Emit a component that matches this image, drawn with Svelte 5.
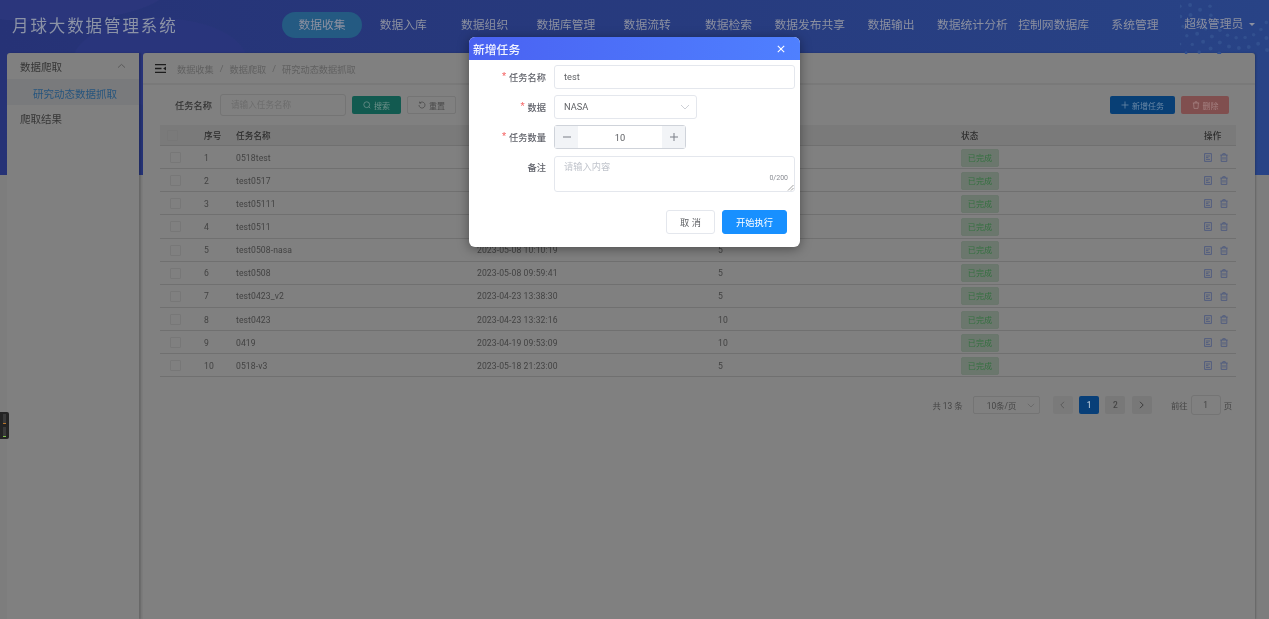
<script lang="ts">
  const navItems = ['数据收集', '数据入库', '数据组织', '数据库管理', '数据流转', '数据检索', '数据发布共享', '数据输出', '数据统计分析', '控制网数据库', '系统管理']

  const rows = [
    { name: '0518test', time: '2023-05-18 21:40:12', count: 5 },
    { name: 'test0517', time: '2023-05-17 15:21:08', count: 5 },
    { name: 'test05111', time: '2023-05-11 11:02:36', count: 10 },
    { name: 'test0511', time: '2023-05-11 10:47:55', count: 10 },
    { name: 'test0508-nasa', time: '2023-05-08 10:10:19', count: 5 },
    { name: 'test0508', time: '2023-05-08 09:59:41', count: 5 },
    { name: 'test0423_v2', time: '2023-04-23 13:38:30', count: 5 },
    { name: 'test0423', time: '2023-04-23 13:32:16', count: 10 },
    { name: '0419', time: '2023-04-19 09:53:09', count: 10 },
    { name: '0518-v3', time: '2023-05-18 21:23:00', count: 5 },
  ]

  // dots in the header's top right corner
  const dots: { x: number; y: number; r: number }[] = []
  for (const [radius, step, r] of [[30, 0.3, 1.8], [40, 0.25, 2], [50, 0.2, 2], [60, 0.17, 1.7], [70, 0.15, 1.4]]) {
    for (let a = -0.4; a < 3.3; a += step) {
      const x = 60 + Math.cos(a) * radius
      const y = 8 + Math.sin(a) * radius
      if (x > 0 && x < 89 && y > 0 && y < 54) dots.push({ x, y, r })
    }
  }
</script>

<div class="page">
  <svg class="dots" width="89" height="54" viewBox="0 0 89 54">
    {#each dots as d}
      <circle cx={d.x} cy={d.y} r={d.r} fill="#32508f" />
    {/each}
  </svg>

  <header class="topbar">
    <div class="title">月球大数据管理系统</div>
    <nav class="nav">
      {#each navItems as item, i}
        <span class="nav-item" class:active={i === 0}>{item}</span>
      {/each}
    </nav>
    <div class="user">超级管理员<i class="caret"></i></div>
  </header>

  <div class="body">
    <aside class="sidebar">
      <div class="menu-title">
        <span>数据爬取</span>
        <svg width="9" height="6" viewBox="0 0 9 6"><path d="M1 4.6 4.5 1.4 8 4.6" fill="none" stroke="#5a5a5a" stroke-width="1" /></svg>
      </div>
      <div class="menu-sub">研究动态数据抓取</div>
      <div class="menu-title">爬取结果</div>
    </aside>

    <main class="content">
      <div class="crumbs">
        <svg class="fold" width="11" height="9" viewBox="0 0 11 9">
          <path d="M0 .7h11M0 4.5h6.5M0 8.3h11" stroke="#1c1c1c" stroke-width="1.3" />
          <path d="M11 2.6v3.8L8.2 4.5z" fill="#1c1c1c" />
        </svg>
        <span>数据收集</span><b>/</b><span>数据爬取</span><b>/</b><span>研究动态数据抓取</span>
      </div>

      <div class="panel">
        <div class="toolbar">
          <label class="search-label" for="task-name">任务名称</label>
          <input id="task-name" class="search-input" placeholder="请输入任务名称" />
          <button class="btn teal">
            <svg width="8" height="8" viewBox="0 0 8 8"><circle cx="3.7" cy="3.7" r="2.9" fill="none" stroke="currentColor" stroke-width=".8" /><path d="M5.8 5.8 7.3 7.3" stroke="currentColor" stroke-width=".8" /></svg>
            搜索
          </button>
          <button class="btn plain">
            <svg width="8" height="8" viewBox="0 0 8 8"><path d="M1 4a3 3 0 1 0 1-2.2M1.6.6v1.6h1.6" fill="none" stroke="currentColor" stroke-width=".8" /></svg>
            重置
          </button>
          <span class="spacer"></span>
          <button class="btn blue">
            <svg width="8" height="8" viewBox="0 0 8 8"><path d="M4 .5v7M.5 4h7" stroke="currentColor" stroke-width=".8" /></svg>
            新增任务
          </button>
          <button class="btn red">
            <svg width="8" height="8" viewBox="0 0 8 8"><path d="M.8 2h6.4M3 2V.8h2V2M1.6 2l.4 5.4h4L6.4 2" fill="none" stroke="currentColor" stroke-width=".8" /></svg>
            删除
          </button>
        </div>

        <div class="table">
          <div class="tr head">
            <span class="check head-check"></span>
            <span>序号</span>
            <span>任务名称</span>
            <span>创建时间</span>
            <span>任务数量</span>
            <span>状态</span>
            <span>操作</span>
          </div>
          {#each rows as row, i}
            <div class="tr">
              <span class="check"></span>
              <span>{i + 1}</span>
              <span>{row.name}</span>
              <span>{row.time}</span>
              <span>{row.count}</span>
              <span><em class="tag">已完成</em></span>
              <span class="ops">
                <svg width="8" height="9" viewBox="0 0 8 9"><path d="M.6.6h6.8v7.8H.6zM2 3h4M2 4.6h2.4M2 6.4h4" fill="none" stroke="#48567f" stroke-width=".8" /></svg>
                <svg width="8" height="9" viewBox="0 0 8 9"><path d="M.4 2h7.2M2.8 2V.7h2.4V2M1.2 2v6.4h5.6V2M3 4v2.6M5 4v2.6" fill="none" stroke="#48567f" stroke-width=".8" /></svg>
              </span>
            </div>
          {/each}
        </div>

        <div class="pager">
          <span>共 13 条</span>
          <span class="size">10条/页
            <svg width="8" height="5" viewBox="0 0 8 5"><path d="M.8.8 4 4l3.2-3.2" fill="none" stroke="#666" stroke-width=".8" /></svg>
          </span>
          <span class="pages">
            <span class="page-btn faint">
              <svg width="5" height="8" viewBox="0 0 5 8"><path d="M4 .8.8 4 4 7.2" fill="none" stroke="#5c5c5c" stroke-width="1" /></svg>
            </span>
            <span class="page-btn current">1</span>
            <span class="page-btn">2</span>
            <span class="page-btn">
              <svg width="5" height="8" viewBox="0 0 5 8"><path d="M1 .8 4.2 4 1 7.2" fill="none" stroke="#3c3c3c" stroke-width="1" /></svg>
            </span>
          </span>
          <span class="jump"><span>前往</span><span class="jump-box">1</span><span>页</span></span>
        </div>
      </div>
    </main>
  </div>

  <div class="widget">
    <div class="seg"><i class="o"></i></div>
    <div class="seg"><i class="g"></i></div>
  </div>

  <div class="dialog">
    <div class="dialog-head">
      <span>新增任务</span>
      <svg width="8" height="8" viewBox="0 0 8 8"><path d="M.8.8l6.4 6.4M7.2.8.8 7.2" stroke="#fff" stroke-width="1.1" /></svg>
    </div>
    <div class="form">
      <div class="field">
        <span class="flabel"><i>*</i><span>任务名称</span></span>
        <span class="box wide"><span class="val">test</span></span>
      </div>
      <div class="field">
        <span class="flabel"><i>*</i><span>数据</span></span>
        <span class="box select"><span class="val">NASA</span>
          <svg width="10" height="6" viewBox="0 0 10 6"><path d="M1 1 5 5l4-4" fill="none" stroke="#c0c4cc" stroke-width=".8" /></svg>
        </span>
      </div>
      <div class="field">
        <span class="flabel"><i>*</i><span>任务数量</span></span>
        <span class="stepper">
          <span class="step"><svg width="10" height="10" viewBox="0 0 10 10"><path d="M1 5h8" stroke="#7b7f87" stroke-width="1" /></svg></span>
          <span class="num">10</span>
          <span class="step"><svg width="10" height="10" viewBox="0 0 10 10"><path d="M1 5h8M5 1v8" stroke="#7b7f87" stroke-width="1" /></svg></span>
        </span>
      </div>
      <div class="field top">
        <span class="flabel"><span>备注</span></span>
        <span class="box area">
          <span class="ph">请输入内容</span>
          <span class="counter">0/200</span>
          <svg class="grip" width="7" height="7" viewBox="0 0 7 7"><path d="M1 6.5 6.5 1M4 6.5 6.5 4" stroke="#777" stroke-width=".7" /></svg>
        </span>
      </div>
    </div>
    <div class="dialog-foot">
      <button class="dbtn">取 消</button>
      <button class="dbtn primary">开始执行</button>
    </div>
  </div>
</div>

<style>
  :global(body) {
    margin: 0;
    overflow: hidden;
  }

  .page {
    position: relative;
    height: 619px;
    overflow: hidden;
    font-family: Roboto, 'Noto Sans CJK SC', sans-serif;
    font-size: 8.6px;
    color: #424242;
    filter: blur(0.35px);
    background:
      linear-gradient(#7d7d7d, #7d7d7d) 0 175px no-repeat,
      radial-gradient(ellipse 125px 36px at 45px -14px, #2b367c 98%, transparent 100%) no-repeat,
      radial-gradient(ellipse 88px 44px at 160px 62px, #29357c 98%, transparent 100%) no-repeat,
      linear-gradient(90deg, #263276, #284386);
  }

  .dots {
    position: absolute;
    top: 0;
    right: 0;
  }

  .topbar {
    position: relative;
    display: flex;
    align-items: center;
    height: 53px;
    padding: 0 0 4px 12px;
    box-sizing: border-box;
  }

  .title {
    width: 270px;
    font-size: 16.5px;
    letter-spacing: 1.9px;
    color: #8c93a6;
    white-space: nowrap;
  }

  .nav {
    display: grid;
    grid-template-columns: repeat(11, 81.3px);
  }

  .nav-item {
    width: 80px;
    height: 26px;
    line-height: 26px;
    text-align: center;
    font-size: 11.8px;
    color: #8c90a0;
    white-space: nowrap;
  }

  .nav-item.active {
    background: #245a82;
    border-radius: 13px;
  }

  .user {
    margin-left: 8px;
    font-size: 11.8px;
    color: #8c90a0;
    white-space: nowrap;
    transform: translateY(-2px);
  }

  .caret {
    display: inline-block;
    margin-left: 6px;
    border: 3px solid transparent;
    border-top-color: #8c90a0;
    vertical-align: -1px;
  }

  .body {
    display: flex;
    height: 566px;
    padding-left: 7px;
  }

  .sidebar {
    width: 132px;
    background: #808080;
    border-radius: 3px 0 0 0;
    box-shadow: 2px 0 2px rgba(0, 0, 0, 0.18);
    font-size: 10.5px;
    color: #363636;
  }

  .menu-title {
    display: flex;
    align-items: center;
    justify-content: space-between;
    height: 26px;
    padding: 0 13px;
  }

  .menu-sub {
    display: flex;
    align-items: center;
    height: 26px;
    padding: 2px 0 0 26px;
    box-sizing: border-box;
    background: #797a7c;
    color: #26557e;
  }

  .content {
    width: 1112px;
    margin-left: 4px;
    background: #808080;
    border-radius: 3px 3px 0 0;
    box-shadow: 1px 0 2px rgba(0, 0, 0, 0.2);
  }

  .crumbs {
    display: flex;
    align-items: center;
    height: 32px;
    box-sizing: border-box;
    padding: 1px 0 0 12px;
    border-bottom: 2px solid #797979;
    font-size: 9.2px;
    color: #606060;
  }

  .fold {
    margin-right: 11px;
    margin-top: -1px;
  }

  .crumbs b {
    margin: 0 6px;
    font-weight: 400;
  }

  .panel {
    padding: 9px 19px 0 17px;
  }

  .toolbar {
    display: flex;
    align-items: center;
    height: 22px;
    padding-left: 15px;
    margin-bottom: 9px;
  }

  .search-label {
    width: 45px;
    font-size: 9.25px;
    font-weight: 500;
    color: #333;
  }

  .search-input {
    width: 126px;
    height: 22px;
    box-sizing: border-box;
    padding: 0 10px;
    margin-right: 6px;
    background: transparent;
    border: 1px solid #747474;
    border-radius: 3px;
    font: inherit;
  }

  .search-input::placeholder {
    color: #6c6c6c;
  }

  .spacer {
    flex: 1;
  }

  .btn {
    display: flex;
    align-items: center;
    justify-content: center;
    gap: 3px;
    width: 49px;
    height: 18px;
    padding: 0;
    margin-right: 6px;
    border: 1px solid transparent;
    border-radius: 2px;
    font: inherit;
    font-size: 8px;
  }

  .teal { background: #125a50; color: #6f918b; }
  .plain { background: transparent; border-color: #747474; color: #4a4a4a; }
  .blue { width: 65px; background: #083f75; color: #6a88a6; }
  .red { width: 48px; margin-right: 7px; background: #804f4f; color: #a38080; }

  .tr {
    display: grid;
    grid-template-columns: 44px 32px 241px 241px 243px 243px 32px;
    align-items: center;
    height: 23.15px;
    box-sizing: border-box;
    padding-top: 1px;
    border-bottom: 1px solid #707070;
    letter-spacing: 0.1px;
  }

  .tr.head {
    height: 21px;
    padding-top: 0;
    background: #7a7a7a;
    font-weight: 500;
    color: #2e2e2e;
  }

  .check {
    width: 9px;
    height: 9px;
    margin-left: 10px;
    border: 1px solid #777;
    border-radius: 1px;
  }

  .head-check {
    margin-left: 7px;
  }

  .tag {
    display: block;
    width: 38px;
    height: 18px;
    line-height: 17px;
    box-sizing: border-box;
    text-align: center;
    font-style: normal;
    font-size: 8px;
    background: #6b776d;
    border: 1px solid #6a766c;
    border-radius: 2px;
    color: #33703f;
  }

  .ops {
    display: flex;
    gap: 8px;
  }

  .pager {
    display: flex;
    align-items: center;
    justify-content: flex-end;
    height: 20px;
    margin-top: 18px;
    padding-right: 4px;
    color: #444;
    font-size: 8.4px;
  }

  .size {
    display: flex;
    align-items: center;
    justify-content: space-between;
    width: 67px;
    height: 18px;
    box-sizing: border-box;
    margin-left: 10px;
    padding: 0 4px 0 13px;
    border: 1px solid #747474;
    border-radius: 2px;
  }

  .pages {
    display: flex;
    gap: 6.4px;
    margin: 0 19px 0 13px;
  }

  .page-btn {
    display: flex;
    align-items: center;
    justify-content: center;
    width: 20px;
    height: 18px;
    background: #787878;
    border-radius: 2px;
    font-weight: 500;
  }

  .page-btn.faint {
    background: #7a7a7a;
  }

  .page-btn.current {
    background: #083f78;
    color: #aebfd0;
  }

  .jump {
    display: flex;
    align-items: center;
    gap: 3px;
  }

  .jump-box {
    display: flex;
    align-items: center;
    justify-content: center;
    width: 30px;
    height: 20px;
    border: 1px solid #747474;
    border-radius: 3px;
    box-sizing: border-box;
  }

  .widget {
    position: absolute;
    left: 0;
    top: 412px;
    display: flex;
    flex-direction: column;
    align-items: center;
    gap: 3px;
    width: 9px;
    height: 27px;
    padding-top: 2px;
    box-sizing: border-box;
    background: #242424;
    border-radius: 0 2px 2px 0;
  }

  .seg {
    display: flex;
    align-items: flex-end;
    width: 3px;
    height: 10px;
    background: #3a3a3a;
  }

  .widget i {
    display: block;
    width: 3px;
    height: 1px;
  }

  .o { background: #b8752a; }
  .g { background: #7fc24a; }

  .dialog {
    position: absolute;
    left: 469px;
    top: 37px;
    width: 331px;
    height: 210px;
    background: #fff;
    border-radius: 6px;
    box-shadow: 0 2px 12px rgba(0, 0, 0, 0.4);
    overflow: hidden;
  }

  .dialog-head {
    display: flex;
    align-items: center;
    justify-content: space-between;
    height: 23px;
    padding: 0 15px 0 4px;
    background: linear-gradient(90deg, #4a62f2, #4f80ff);
    color: #f2f4ff;
    font-size: 11.8px;
    font-weight: 500;
  }

  .form {
    display: flex;
    flex-direction: column;
    gap: 6px;
    padding: 5px 5px 0 0;
  }

  .field {
    display: flex;
    align-items: center;
    gap: 8px;
  }

  .field.top {
    align-items: flex-start;
    margin-top: 1px;
  }

  .flabel {
    display: flex;
    justify-content: flex-end;
    gap: 3px;
    width: 77px;
    font-size: 9.25px;
    font-weight: 500;
    color: #60626a;
    transform: translateY(-0.5px);
  }

  .field.top .flabel {
    line-height: 24px;
  }

  .flabel i {
    font-style: normal;
    color: #f56c6c;
  }

  .box {
    display: flex;
    align-items: center;
    height: 24px;
    box-sizing: border-box;
    padding: 0 9px;
    border: 1px solid #e4e7ed;
    border-radius: 3px;
    color: #606266;
    font-size: 9.25px;
  }

  .val {
    margin-top: -1px;
  }

  .box.wide {
    width: 241px;
  }

  .box.select {
    width: 143px;
    justify-content: space-between;
    padding-right: 6px;
  }

  .stepper {
    display: flex;
    align-items: center;
    width: 132px;
    height: 24px;
    box-sizing: border-box;
    border: 1px solid #cfd3da;
    border-radius: 3px;
    font-size: 9.25px;
    color: #606266;
  }

  .step {
    display: flex;
    align-items: center;
    justify-content: center;
    width: 23px;
    height: 100%;
    background: #f2f4f7;
  }

  .num {
    flex: 1;
    text-align: center;
  }

  .box.area {
    position: relative;
    align-items: flex-start;
    width: 241px;
    height: 36px;
    padding-top: 2px;
  }

  .ph {
    color: #c0c4cc;
  }

  .counter {
    position: absolute;
    right: 6px;
    bottom: 9px;
    font-size: 7px;
    color: #8a8d94;
  }

  .grip {
    position: absolute;
    right: 0;
    bottom: 0;
  }

  .dialog-foot {
    display: flex;
    justify-content: flex-end;
    gap: 7px;
    padding: 18px 13px 0 0;
  }

  .dbtn {
    width: 49px;
    height: 24px;
    padding: 0;
    background: #fff;
    border: 1px solid #e4e7ed;
    border-radius: 3px;
    font: inherit;
    font-size: 9.25px;
    color: #606266;
  }

  .dbtn.primary {
    width: 65px;
    background: #1890ff;
    border-color: #1890ff;
    color: #fff;
  }
</style>
